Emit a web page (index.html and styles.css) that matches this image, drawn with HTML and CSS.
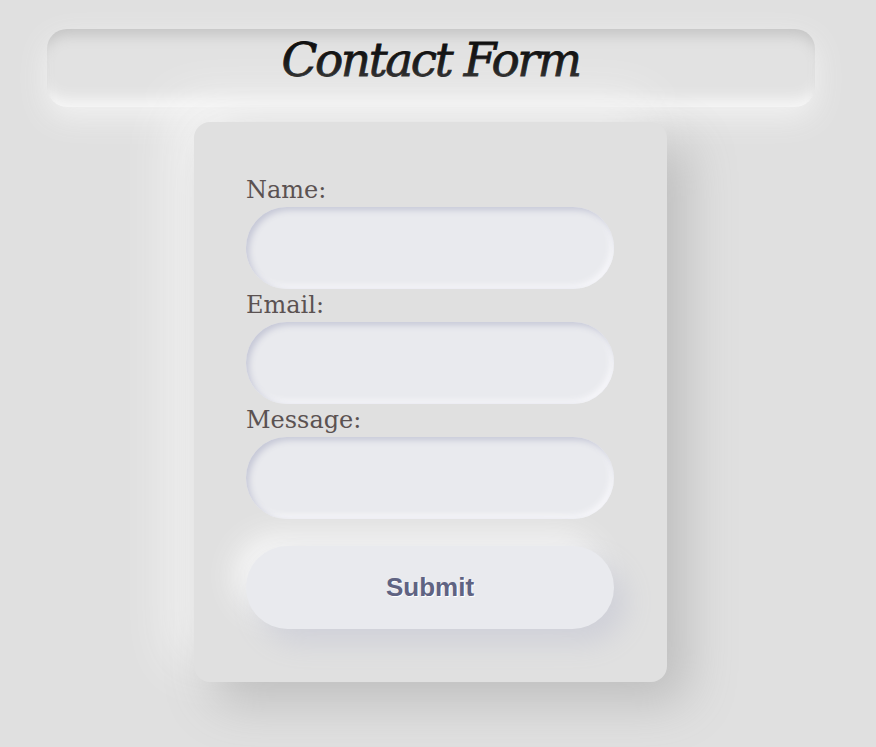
FILE: index.html
```html
<!DOCTYPE html>
<html>
<head>
<meta charset="utf-8">
<link rel="stylesheet" href="styles.css">
</head>
<body>
<main class="page">
  <header class="title-bar">
    <h1 class="title">Contact Form</h1>
  </header>
  <form class="card">
    <label class="label" for="name">Name:</label>
    <input class="field" id="name" type="text">
    <label class="label" for="email">Email:</label>
    <input class="field" id="email" type="email">
    <label class="label" for="msg">Message:</label>
    <input class="field" id="msg" type="text">
    <button class="submit" type="button">Submit</button>
  </form>
</main>
</body>
</html>
```
FILE: styles.css
```css
html {
  background: #e0e0e0;
}
body {
  margin: 0;
  padding: 0;
}
.page {
  width: 861px;
  min-height: 747px;
  box-sizing: border-box;
  display: flex;
  flex-direction: column;
  align-items: center;
  padding-top: 29px;
}
.title-bar {
  width: 768px;
  height: 78px;
  border-radius: 20px;
  background: #e2e2e2;
  box-shadow: inset 0 12px 14px -6px #c4c4c4, inset 0 -14px 14px -6px #f6f6f6, 0 10px 30px #f2f2f2;
  display: flex;
  justify-content: center;
}
.title {
  margin: 0;
  font-family: "DejaVu Serif", serif;
  font-style: italic;
  font-weight: normal;
  font-size: 47px;
  letter-spacing: -2.4px;
  line-height: 62px;
  color: #111;
  -webkit-text-stroke: 0.8px #111;
}
.card {
  margin-top: 15px;
  width: 473px;
  height: 560px;
  box-sizing: border-box;
  padding: 52px 52px 0;
  border-radius: 16px;
  background: #e0e0e0;
  box-shadow: 20px 20px 50px #bdbdbd, -20px -20px 50px #f7f7f7;
  display: flex;
  flex-direction: column;
  align-items: flex-start;
}
.label {
  font-family: "DejaVu Serif", serif;
  font-size: 24px;
  line-height: 33px;
  color: #5b5252;
}
.field {
  width: 368px;
  height: 82px;
  box-sizing: border-box;
  border: none;
  outline: none;
  border-radius: 41px;
  background: #e9eaee;
  box-shadow: inset 3px 3px 6px #c5c7d6, inset -3px -3px 6px #f8f8fb;
}
.submit {
  margin-top: 27px;
  width: 368px;
  height: 83px;
  border: none;
  border-radius: 42px;
  background: #e9eaee;
  font-family: "Liberation Sans", Arial, sans-serif;
  font-weight: bold;
  font-size: 26px;
  color: #5f6382;
  text-shadow: 1px 1px 0 #fff;
  box-shadow: 12px 14px 28px #cfd0d8, -12px -12px 28px #f6f6f6;
}
```
